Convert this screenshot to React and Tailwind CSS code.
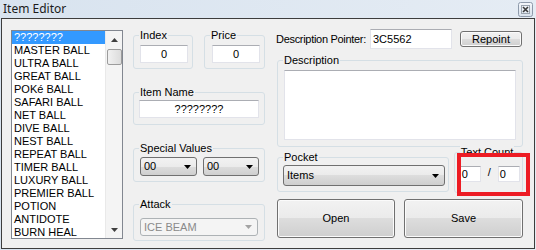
import React from "react";

const items = [
  "????????",
  "MASTER BALL",
  "ULTRA BALL",
  "GREAT BALL",
  "POKé BALL",
  "SAFARI BALL",
  "NET BALL",
  "DIVE BALL",
  "NEST BALL",
  "REPEAT BALL",
  "TIMER BALL",
  "LUXURY BALL",
  "PREMIER BALL",
  "POTION",
  "ANTIDOTE",
  "BURN HEAL",
];

const GroupBox = ({ label, className, children }) => (
  <div className={`relative rounded-[3px] border border-[#d5dfe5] ${className}`}>
    <span className="absolute -top-[7px] left-[5px] whitespace-nowrap bg-[#f0f0f0] px-px leading-[13px]">
      {label}
    </span>
    {children}
  </div>
);

const TextBox = ({ className, children }) => (
  <div
    className={`flex items-center border border-[#e2e3ea] border-t-[#abadb3] bg-white leading-[13px] ${className}`}
  >
    {children}
  </div>
);

const Arrow = ({ color }) => (
  <svg width="7" height="4" viewBox="0 0 7 4" aria-hidden="true">
    <path d="M0 0h7L3.5 4z" fill={color} />
  </svg>
);

const Combo = ({ value, className, disabled }) => (
  <div
    className={`flex items-center justify-between rounded-[3px] border pl-[3px] pr-[5px] leading-[13px] ${
      disabled
        ? "border-[#adb2b5] bg-[#f4f4f4] text-[#8a8a8a]"
        : "border-[#707070] bg-[linear-gradient(#f2f2f2,#ebebeb_50%,#dddddd_50%,#cfcfcf)] text-black"
    } ${className}`}
  >
    <span>{value}</span>
    <Arrow color={disabled ? "#a3a3a3" : "#000"} />
  </div>
);

const WinButton = ({ children, className }) => (
  <div
    className={`flex items-center justify-center rounded-[3px] border border-[#707070] bg-[linear-gradient(#f2f2f2,#ebebeb_50%,#dddddd_50%,#cfcfcf)] shadow-[inset_0_0_0_1px_#fbfbfb] leading-[13px] ${className}`}
  >
    {children}
  </div>
);

const CloseIcon = () => (
  <svg width="15" height="15" viewBox="0 0 15 15" aria-hidden="true">
    <defs>
      <linearGradient id="cb" x1="0" y1="0" x2="0" y2="1">
        <stop offset="0" stopColor="#f4f7fb" />
        <stop offset="1" stopColor="#d9e2ec" />
      </linearGradient>
    </defs>
    <rect x="0.5" y="0.5" width="14" height="14" rx="2" fill="url(#cb)" stroke="#8e9aab" />
    <rect x="3.5" y="3.5" width="8" height="8" fill="none" stroke="#9aa3ae" />
    <path d="M5 5l5 5M10 5l-5 5" stroke="#3a3a3a" strokeWidth="1.6" />
  </svg>
);

export default function App() {
  return (
    <div className="relative h-[250px] w-[536px] overflow-hidden bg-[linear-gradient(to_right,#d8e3ef,#e5ecf4)] font-['Liberation_Sans',Arial,sans-serif] text-[11px] text-black">
      {/* title bar */}
      <div className="flex h-[18px] items-start justify-between">
        <span className="ml-[3px] mt-[1px] font-['Noto_Sans',sans-serif] text-[12px] leading-[16px] text-[#1b1b1b]">
          Item Editor
        </span>
        <div className="mr-[3px] mt-[2px] h-[15px] w-[15px]">
          <CloseIcon />
        </div>
      </div>

      {/* client area */}
      <div className="ml-px flex h-[231px] w-[534px] items-start border border-[#3d3d3d] bg-[#f0f0f0]">
        {/* list box */}
        <div className="ml-[9px] mt-[11px] flex h-[209px] w-[112px] overflow-hidden border border-[#828790] bg-white">
          <div className="flex-1">
            {items.map((name, i) => (
              <div
                key={name}
                className={`h-[13px] pl-[2px] leading-[13px] ${
                  i === 0 ? "bg-[#3399ff] text-white" : ""
                }`}
              >
                {name}
              </div>
            ))}
          </div>
          <div className="flex w-[17px] flex-col items-center justify-between border-l border-[#e9e9e9] bg-[#f4f4f4]">
            <div>
              <div className="flex h-[17px] items-center justify-center">
                <svg width="7" height="4" viewBox="0 0 7 4" aria-hidden="true">
                  <path d="M0 4h7L3.5 0z" fill="#3f3f3f" />
                </svg>
              </div>
              <div className="mt-px h-[16px] w-[15px] rounded-[2px] border border-[#9c9c9c] bg-[linear-gradient(to_right,#f1f1f1,#dcdcdc)]" />
            </div>
            <div className="flex h-[17px] items-center justify-center">
              <Arrow color="#3f3f3f" />
            </div>
          </div>
        </div>

        {/* middle column */}
        <div className="ml-[10px] mt-[16px] flex w-[132px] flex-col">
          <div className="flex gap-[11px]">
            <GroupBox label="Index" className="h-[34px] w-[60px] pl-[6px] pt-[9px]">
              <TextBox className="h-[18px] w-[48px] justify-center">0</TextBox>
            </GroupBox>
            <GroupBox label="Price" className="h-[34px] w-[61px] pl-[7px] pt-[9px]">
              <TextBox className="h-[18px] w-[48px] justify-center">0</TextBox>
            </GroupBox>
          </div>
          <GroupBox label="Item Name" className="mt-[23px] h-[33px] w-[132px] pl-[5px] pt-[7px]">
            <TextBox className="h-[18px] w-[120px] justify-center">????????</TextBox>
          </GroupBox>
          <GroupBox label="Special Values" className="mt-[23px] flex h-[34px] w-[132px] gap-[6px] pl-[6px] pt-[8px]">
            <Combo value="00" className="h-[19px] w-[57px]" />
            <Combo value="00" className="h-[19px] w-[56px]" />
          </GroupBox>
          <GroupBox label="Attack" className="mt-[22px] h-[37px] w-[132px] pl-[6px] pt-[13px]">
            <Combo value="ICE BEAM" disabled className="h-[18px] w-[118px]" />
          </GroupBox>
        </div>

        {/* right column */}
        <div className="ml-[11px] mt-[10px] flex w-[247px] flex-col">
          <div className="flex h-[20px] items-center">
            <span className="w-[94px] whitespace-nowrap leading-[13px] tracking-[-0.3px]">
              Description Pointer:
            </span>
            <TextBox className="h-[20px] w-[82px] pl-[2px]">3C5562</TextBox>
            <WinButton className="ml-[8px] h-[16px] w-[62px]">Repoint</WinButton>
          </div>
          <GroupBox label="Description" className="ml-px mt-[11px] h-[87px] w-[246px] pl-[6px] pt-[9px]">
            <div className="h-[70px] w-[232px] border border-[#e2e3ea] border-t-[#abadb3] bg-white" />
          </GroupBox>
          <div className="mt-[6px] flex items-start">
            <GroupBox label="Pocket" className="ml-px mt-[4px] h-[35px] w-[174px] pl-[5px] pt-[7px]">
              <Combo value="Items" className="h-[21px] w-[162px]" />
            </GroupBox>
            <GroupBox label="Text Count" className="-mt-px ml-[5px] flex h-[41px] w-[70px] items-start pl-[5px] pt-[13px]">
              <TextBox className="h-[16px] w-[21px] pl-px">0</TextBox>
              <span className="w-[17px] text-center leading-[13px]">/</span>
              <TextBox className="h-[16px] w-[22px] pl-px">0</TextBox>
            </GroupBox>
          </div>
          <div className="mt-[6px] flex">
            <WinButton className="ml-px h-[39px] w-[118px]">Open</WinButton>
            <WinButton className="ml-[9px] h-[39px] w-[119px]">Save</WinButton>
          </div>
        </div>
      </div>

      {/* highlight rectangle drawn over the screenshot */}
      <div className="absolute left-[457px] top-[153px] h-[43px] w-[73px] border-4 border-[#ed1c24]" />
    </div>
  );
}
